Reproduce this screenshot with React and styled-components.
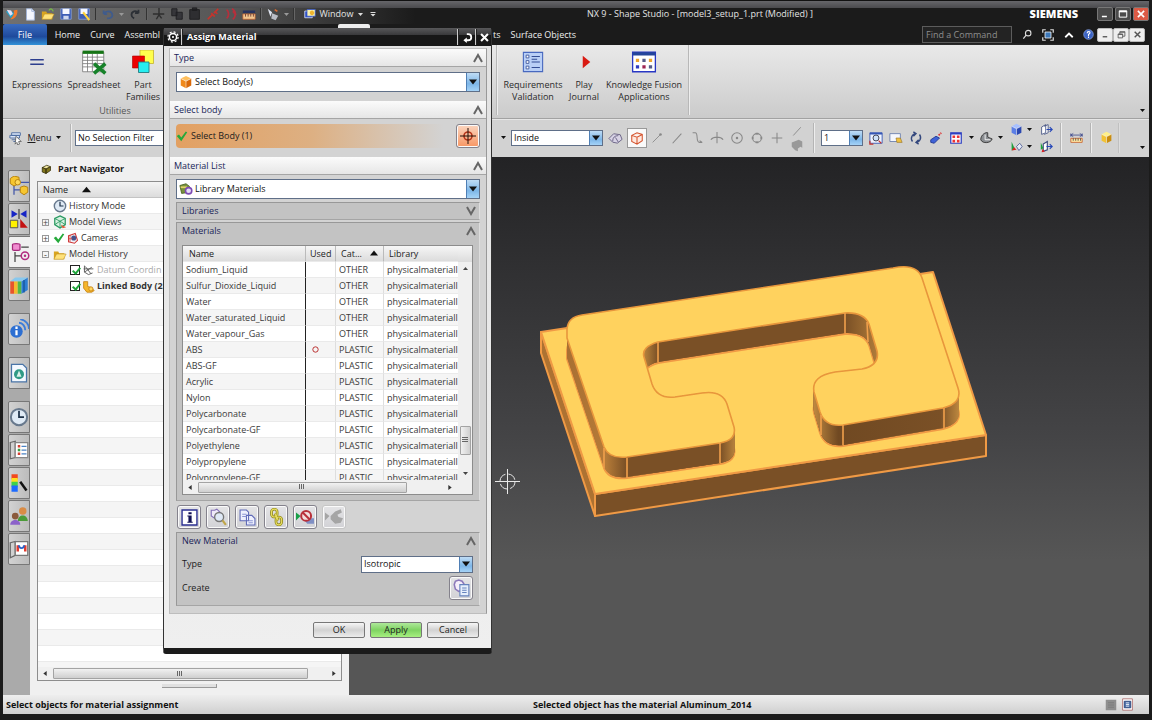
import { useState } from "react";
import styled, { createGlobalStyle, css } from "styled-components";

const GlobalStyle = createGlobalStyle`
  * { box-sizing: border-box; }
  body {
    margin: 0;
    background: #161616;
    color: #1c1c1c;
    font: 9px/12px "Open Sans", "Noto Sans", sans-serif;
  }
  button, select, input { font: inherit; color: inherit; margin: 0; }
  button { padding: 0; border: 0; background: none; }
  h1, h2, ul { margin: 0; padding: 0; font: inherit; list-style: none; }
  svg { display: block; flex: none; }
`;

/* ---------- icons ---------- */

const art = {
  logo: <><path d="M1 5l6 8 4-6-5-3z" fill="#27a3c9" /><path d="M6 14c6 0 9-6 8-11l-4 1c1 4-1 7-4 10z" fill="#f07a2c" /><path d="M2 3l5 1 2 4-3 2z" fill="#e8e0f4" /></>,
  page: <><path d="M4 2h6l3 3v10H4z" fill="#f4f7ff" stroke="#9fb2d8" /><path d="M10 2v3h3" fill="none" stroke="#9fb2d8" /></>,
  folder: <><path d="M1 14V5h5l1 2h6v7z" fill="#d9a520" /><path d="M1 14l3-6h11l-3 6z" fill="#ffe27a" stroke="#b98a1c" strokeWidth=".6" /></>,
  openFile: <><path d="M1 14V5h5l1 2h6v7z" fill="#d9a520" /><path d="M1 14l3-6h11l-3 6z" fill="#ffe27a" stroke="#b98a1c" strokeWidth=".6" /><path d="M9 4c2-3 4-2 5 1" fill="none" stroke="#79c143" strokeWidth="1.4" /></>,
  disk: <><path d="M2 2h12v12H2z" fill="#3d5db5" stroke="#8ea6e0" strokeWidth=".8" /><path d="M4 2h8v6H4z" fill="#f5f7ff" /><path d="M5 10h6v4H5z" fill="#cfd8ee" /></>,
  diskAs: <><path d="M2 2h12v12H2z" fill="#3d5db5" stroke="#8ea6e0" strokeWidth=".8" /><path d="M4 2h8v6H4z" fill="#f5f7ff" /><path d="M7 6l7 9" stroke="#ffd23c" strokeWidth="2.4" /></>,
  undo: <path d="M3 8c3-4 9-4 10 1 0 3-3 4-6 4M3 8V4M3 8h4" fill="none" stroke="#3f5b8c" strokeWidth="2" />,
  redo: <path d="M12 7C9 3 4 5 4 9c0 2 1 3 3 4M12 7V3M12 7H8" fill="none" stroke="#2c3036" strokeWidth="2" />,
  cut: <path d="M8 1v9M1 8h13M5 14l3-5 3 4" fill="none" stroke="#2e2e2e" strokeWidth="1.6" />,
  copy: <path d="M2 2h6v8H2zM7 6h7v8H7z" fill="#36363a" stroke="#1f1f22" />,
  paste: <path d="M2 3h11v11H2zM5 1h5v3H5z" fill="#2e2e31" stroke="#1d1d1f" />,
  curveRed: <path d="M2 14l5-5M9 7l5-5M6 7l4 4M10 5l3 3" fill="none" stroke="#c4342c" strokeWidth="2" />,
  spring: <path d="M3 3c3 2 3 8 0 10M9 2c5 2 5 9 1 12M10 5l4 4" fill="none" stroke="#b52f3c" strokeWidth="2" />,
  calendar: <><path d="M1 4h14v3H1z" fill="#26335f" /><path d="M1 8h14v6H1z" fill="#f0c58f" stroke="#c5602d" strokeWidth=".8" /><path d="M4 8v3M7 8v3M10 8v3M13 8v3" stroke="#6b3a33" /></>,
  touch: <><path d="M2 2l5 4-2 5z" fill="#dfe4ef" /><path d="M7 7l7 3-3 5-5-2z" fill="#b9bcc5" /><path d="M10 3l3 2" stroke="#d86a33" strokeWidth="2" /></>,
  windows: <><path d="M1 4h10v9H1z" fill="#2d4fc4" stroke="#e6edff" /><path d="M4 2h11v9H4z" fill="#f7f2b2" stroke="#3153c9" /><path d="M9 9a3 3 0 100-5 3 3 0 000 5z" fill="#f0b52e" /></>,
  cube: (a, b, c) => <><path d="M8 1l6 3-6 3-6-3z" fill={a} /><path d="M2 4l6 3v8l-6-3z" fill={b} /><path d="M14 4L8 7v8l6-3z" fill={c} /><path d="M2 4l6 3 6-3M8 7v8" fill="none" stroke="#fff" strokeWidth=".6" /></>,
  menu: <><path d="M3 2h10v3H3zM1 5h11v3H1z" fill="#dbe6f8" stroke="#47679e" /><path d="M3 10h5M5 12h4" stroke="#47679e" /><path d="M8 6l6 6-3 0 1 3-2 1-1-3-2 2z" fill="#fff" stroke="#333" strokeWidth=".7" /></>,
  check: <path d="M1 8l3-2 3 4 6-8 2 1-8 12z" fill="#25a93a" />,
  pinCube: <><path d="M3 6l6-3 5 2-6 3z" fill="#efe5a0" stroke="#332c08" /><path d="M3 6v6l5 2V8zM8 8l6-3v5l-6 4z" fill="#81761c" stroke="#332c08" /></>,
  clock: <><circle cx="8" cy="8" r="6.5" fill="#dfeaf5" stroke="#68798d" strokeWidth="1.6" /><path d="M8 3v5h4" fill="none" stroke="#1e3248" strokeWidth="1.4" /></>,
  views: <><path d="M8 1l6 3v7l-6 4-6-4V4z" fill="#d6f0df" stroke="#2a9a62" strokeWidth="1.4" /><path d="M2 4l6 3 6-3M8 7v8M2 11l6-4 6 4" fill="none" stroke="#2a9a62" /><path d="M9 11l6 3-4 1z" fill="#e25b37" /></>,
  camera: <><path d="M2 5l9-3 3 9-4 4-8-2z" fill="#f3f3f8" stroke="#d03939" strokeWidth="1.4" /><circle cx="9" cy="8" r="3.4" fill="#46538d" /><path d="M4 4v9M2 9h5" stroke="#d03939" /></>,
  datum: <path d="M3 2v8l5 3 5-2M3 10L12 4M4 3l7 9M2 6h12" fill="none" stroke="#555" strokeWidth="1.1" />,
  linked: <><path d="M2 2h5v6l4 1 4 4-3 2H6L2 10z" fill="#f5b62b" stroke="#c47f10" /><circle cx="11" cy="11" r="2.6" fill="#ffd760" stroke="#c47f10" /></>,
  tree1: <><path d="M4 6v9M4 11h6M7 5h9" stroke="#4357a8" strokeWidth="1" /><path d="M1 2l3-2 4 1v5L4 8 1 6z" fill="#f6c630" stroke="#b88410" strokeWidth=".8" /><circle cx="7" cy="5" r="2.2" fill="#ffd95a" stroke="#b88410" strokeWidth=".8" /><path d="M9 9l3-1 3 1v4l-3 2-3-2z" fill="#f6c630" stroke="#b88410" strokeWidth=".8" /></>,
  constraint: <><path d="M2 1l5 3-5 3zM14 1L9 4l5 3z" fill="#1725c6" /><path d="M8 0v8" stroke="#444" /><path d="M1 9h6v6H1z" fill="#fff200" stroke="#555" strokeWidth=".8" /><path d="M9 8l6 7H9z" fill="#c31111" /></>,
  partNav: <><path d="M2 2c0-1 6-1 6 0v4c0 1-6 1-6 0z" fill="#f08cd0" stroke="#a52a7b" /><path d="M4 8v8M4 11h5M9 4h6" stroke="#444" /><circle cx="12" cy="11" r="3" fill="none" stroke="#b32c80" strokeWidth="1.2" /><circle cx="12" cy="11" r="1" fill="#b32c80" /></>,
  books: <><path d="M1 5h3v10H1z" fill="#e8542c" /><path d="M4 5h3v10H4z" fill="#f5b92d" /><path d="M7 5h3v10H7z" fill="#53b848" /><path d="M10 5l5-3v10l-5 3z" fill="#2d7fd4" /><path d="M12 4v10" stroke="#174f94" /><path d="M1 5l4-3h10l-5 3z" fill="#88c8ee" /></>,
  info: <><circle cx="6" cy="10" r="5" fill="#2d6fd2" /><path d="M6 9v4M6 6v2" stroke="#fff" strokeWidth="1.8" /><path d="M8 3c3 0 5 3 5 6M9 0c4 1 7 4 7 8" fill="none" stroke="#3b7ddb" strokeWidth="1.5" /></>,
  webPage: <><path d="M2 1h9l3 3v11H2z" fill="#f4f9ff" stroke="#4a75a8" /><circle cx="8" cy="9" r="4" fill="#2f9a86" /><path d="M8 6l2 5H6z" fill="#d7f1e8" /></>,
  palette: <><path d="M1 2l4-1v13l-4 1z" fill="#d0d0d0" stroke="#666" /><path d="M5 2h10v12H5z" fill="#fff" stroke="#888" /><path d="M7 5h2" stroke="#d43f32" strokeWidth="2" /><path d="M7 8h2" stroke="#3a9c42" strokeWidth="2" /><path d="M7 11h2" stroke="#d43f32" strokeWidth="2" /><path d="M10 5h4M10 8h4M10 11h4" stroke="#4b83c4" /></>,
  rainbow: <><path d="M2 1h5v4H2z" fill="#f24a1d" /><path d="M2 4h5v4H2z" fill="#ffe01f" /><path d="M2 7h5v4H2z" fill="#3ed24b" /><path d="M2 10h5v5H2z" fill="#1d6bff" /><path d="M9 7l5 7" stroke="#111" strokeWidth="2" /></>,
  people: <><circle cx="11" cy="4" r="3" fill="#d98c45" /><path d="M7 12c0-6 8-6 8 0z" fill="#4b9b38" /><circle cx="5" cy="8" r="2.7" fill="#8b5a3c" /><path d="M1 15c0-5 8-5 8 0z" fill="#8b62c9" /></>,
  magnet: <><path d="M1 3l4-1v11l-4 2z" fill="#d0d0d0" stroke="#666" /><path d="M5 2h10v11H5z" fill="#fff" stroke="#777" /><path d="M7 5v5M13 5v5" stroke="#e23b2e" strokeWidth="2" /><path d="M8 5c0 3 4 3 4 0" stroke="#2b64c9" fill="none" strokeWidth="1.5" /></>,
  shell: <><path d="M1 9l5-5 7 1 2 5-5 4-5-1z" fill="#d8d3e6" stroke="#6a6384" /><path d="M5 12c0-4 2-6 6-6M8 8l3 5" fill="none" stroke="#6a6384" /></>,
  wireCube: <path d="M2 5l6-3 6 2v7l-6 4-6-3zM2 5l6 2 6-3M8 7v8" fill="#ffe9e0" stroke="#d4532d" strokeWidth="1.2" />,
  line1: <><path d="M3 13L12 4" stroke="#888" /><circle cx="12" cy="4" r="1.5" fill="#888" /></>,
  line2: <path d="M3 14L13 3" stroke="#888" strokeWidth="1.2" />,
  sCurve: <path d="M3 2h3c4 0 0 11 5 11h3M11 11l3 2" fill="none" stroke="#888" strokeWidth="1.2" />,
  cross: <path d="M8 1v13M1 10c3-4 11-4 14 0" fill="none" stroke="#888" strokeWidth="1.2" />,
  target: <><circle cx="8" cy="8" r="6" fill="none" stroke="#888" strokeWidth="1.2" /><circle cx="8" cy="8" r="1.4" fill="#888" /></>,
  quad: <><circle cx="8" cy="8" r="5" fill="none" stroke="#888" strokeWidth="1.2" /><path d="M8 2v2M8 12v2M2 8h2M12 8h2" stroke="#888" strokeWidth="3" /></>,
  plus: <path d="M8 2v12M2 8h12" stroke="#888" strokeWidth="1.2" />,
  face: <path d="M2 5l8-3 4 2v7l-2-1-3 2v3l-3-1-4-4z" fill="#999" />,
  fit: <><path d="M1 2h14v12H1z" fill="#eef3ff" stroke="#3556b5" /><path d="M1 3h14" stroke="#3556b5" strokeWidth="2" /><circle cx="8" cy="8" r="3.4" fill="#cfe2fa" stroke="#334" /><path d="M11 11l3 3M1 11v4h4" stroke="#c7332a" strokeWidth="1.4" fill="none" /></>,
  zoomBox: <><path d="M1 3h12v9H1z" fill="#f5f7fc" stroke="#6a7fae" /><path d="M8 8h5l2 5H9z" fill="#efc13f" stroke="#94712a" strokeWidth=".7" /></>,
  rotate: <path d="M4 12C1 8 4 3 8 3M12 4c3 4 0 9-4 9M5 1l3 2-3 3M11 15l-3-2 3-3" fill="none" stroke="#33477d" strokeWidth="1.6" />,
  pen: <><path d="M2 10l6-4 4 2-6 6-4-1z" fill="#3f62d8" stroke="#23398f" /><path d="M11 5l3-3" stroke="#d33" strokeWidth="2" strokeDasharray="2 1" /></>,
  grid: <><path d="M2 2h12v12H2z" fill="#fff" stroke="#2d3fc0" strokeWidth="1.4" /><path d="M4 5h3v3H4zM9 5h3v3H9zM4 10h3v3H4zM9 10h3v3H9z" fill="#e33" /><path d="M2 3h12" stroke="#2d3fc0" strokeWidth="2" /></>,
  shade: <><path d="M2 10c0-6 6-9 8-8v5l5 2c-1 5-11 6-13 1z" fill="#8b8e92" stroke="#333" /><path d="M7 4v6h6" stroke="#fff" fill="none" /></>,
  clip: <><path d="M2 5l5-3v10l-5 2zM5 4l5-2v10l-5 2" fill="#fff" stroke="#3c4b7d" /><path d="M8 8h7M12 5l3 3-3 3" fill="none" stroke="#2546b8" strokeWidth="1.4" /></>,
  clip2: <><path d="M4 5l5-3v10l-5 2z" fill="#fff" stroke="#3c4b7d" strokeWidth="1.4" /><path d="M1 3v9l3-2z" fill="#1da03d" /><path d="M3 11l3 3-4 1z" fill="#d22" /><path d="M8 8h7M12 5l3 3-3 3" fill="none" stroke="#2546b8" strokeWidth="1.4" /></>,
  axes: <><path d="M2 2v11l4-2z" fill="#1da03d" /><path d="M2 13l6-1-3-3z" fill="#d22" /><path d="M8 8l4-4 3 4-4 5z" fill="#e4eaf8" stroke="#4c5a90" /></>,
  ruler: <><path d="M1 3v4M15 3v4M1 5h14M4 3L1 5l3 2M12 3l3 2-3 2" fill="none" stroke="#3d4a8c" /><path d="M1 9h14v5H1z" fill="#ffe7a3" stroke="#c5602d" /><path d="M4 9v3M7 9v3M10 9v3M13 9v3" stroke="#444" /></>,
  gear: <><circle cx="8" cy="8" r="4.8" fill="none" stroke="#fff" strokeWidth="2" /><circle cx="8" cy="8" r="6.8" fill="none" stroke="#fff" strokeWidth="1.6" strokeDasharray="2.7 2.640" /><circle cx="8" cy="8" r="1.4" fill="#fff" /></>,
  reset: <><path d="M7 3h2c6 0 6 9 0 9H6" fill="none" stroke="#fff" strokeWidth="2.6" /><path d="M7 8v8l-5-4z" fill="#fff" /></>,
  close: <path d="M3 3l10 10M13 3L3 13" stroke="#fff" strokeWidth="3" />,
  library: <><path d="M1 4l7-2 4 3-2 7-7 1z" fill="#78923f" stroke="#4d6522" /><path d="M2 6h7" stroke="#e4d36a" strokeWidth="2" /><circle cx="11" cy="10" r="3.6" fill="#e6dff5" stroke="#7d4bb4" strokeWidth="1.8" /></>,
  aim: <><circle cx="8" cy="8" r="4" fill="none" stroke="#b53419" strokeWidth="1.6" /><path d="M8 0v16M0 8h16" stroke="#221108" strokeWidth="1" /></>,
  infoBox: <><path d="M1 1h14v14H1z" fill="#fff" stroke="#2c3192" strokeWidth="1.3" /><path d="M7 3h3v2H7zM6 6h4v6h1v1H6v-1h1V7H6z" fill="#111154" /></>,
  inspect: <><path d="M2 2h3l2-1 2 2 2 2-1 3-2 2-3-1-3-2z" fill="#efeaf9" stroke="#8370b8" /><circle cx="9" cy="8" r="4" fill="#dfe9f6" stroke="#777" strokeWidth="1.2" /><path d="M12 11l3 4" stroke="#c0a64b" strokeWidth="2" /></>,
  copyDoc: <><path d="M1 1h6l2 2v8H1zM7 6h5l3 3v6H7z" fill="#eef0fd" stroke="#5f6ab8" /><path d="M3 5h4M3 7h4M9 11h4M9 13h4" stroke="#8c95d3" /></>,
  chain: <g fill="none"><g stroke="#8f8618" strokeWidth="2.4"><rect x="4" y="1" width="5" height="7" rx="2.5" /><rect x="8" y="8" width="5" height="7" rx="2.5" /><path d="M7 5l3 6" /></g><g stroke="#e9df62" strokeWidth="1"><rect x="4" y="1" width="5" height="7" rx="2.5" /><rect x="8" y="8" width="5" height="7" rx="2.5" /><path d="M7 5l3 6" /></g></g>,
  noMat: <><path d="M0 4l4 3-4 4z" fill="#18a048" /><path d="M6 9l4 5h6v-5z" fill="#7f8fc4" /><circle cx="9" cy="7" r="4.4" fill="#f2dede" stroke="#b8303a" strokeWidth="1.8" /><path d="M6 4l6 6" stroke="#b8303a" strokeWidth="1.8" /></>,
  grayMat: <path d="M0 4l4 3-4 4zM5 7l4-4 5-2 1 3-4 2 1 2 4 1-2 4-5 1-4-4z" fill="#a5a5a5" />,
  create: <><path d="M3 2l3-1 3 1 2 3-1 5-4 1-3-2-1-4z" fill="#f5eefa" stroke="#8c79ba" strokeWidth="1.4" /><path d="M7 5h8v10H7z" fill="#e6effc" stroke="#6683bd" /><path d="M9 8h4M9 10h4M9 12h4" stroke="#6683bd" /></>,
  equals: <path d="M2 6h12M2 10h12" stroke="#2d3e8e" strokeWidth="1.4" />,
  sheet: <><path d="M1 2h13v12H1z" fill="#fff" stroke="#777" strokeWidth=".5" /><path d="M1 5h13M1 7h13M1 9h13M1 11h13M4 3v11M7 3v11M10 3v11" stroke="#777" strokeWidth=".5" /><path d="M1 1h13v2H1z" fill="#157415" /><path d="M8 9l7 6M15 9l-7 6" stroke="#17822a" strokeWidth="2.2" /></>,
  families: <><path d="M6 0h9v9H6z" fill="#ffff4d" stroke="#c9b93a" strokeWidth=".6" /><path d="M1 4h8v8H1z" fill="#ec0000" stroke="#a00" strokeWidth=".4" /><path d="M5 8h7v7H5z" fill="#26eef0" stroke="#247b80" strokeWidth=".6" /></>,
  requirements: <><path d="M1 1h14v14H1z" fill="#b9cff6" stroke="#4768bf" strokeWidth=".8" /><path d="M7 4h6M7 6h4M7 8h6M7 12h6" stroke="#334d94" strokeWidth=".8" /><path d="M3 3h2v2H3zM3 7h2v2H3zM3 11h2v2H3z" fill="#fff" stroke="#334d94" strokeWidth=".6" /></>,
  play: <path d="M7 3l6 5-6 5z" fill="#d91a12" />,
  fusion: <><path d="M1 2h14v12H1z" fill="#fff" stroke="#2837c4" strokeWidth=".8" /><path d="M1 2h14v2H1z" fill="#24459a" /><g strokeWidth="2"><path d="M3 7h2M11 7h2" stroke="#eea42d" /><path d="M7 7h2M11 11h2" stroke="#555c88" /><path d="M3 11h2" stroke="#303bbf" /><path d="M7 11h2" stroke="#9d2453" /></g></>,
  search: <><circle cx="9" cy="6" r="4" fill="none" stroke="#ddd" strokeWidth="1.6" /><path d="M6 9l-4 5" stroke="#ddd" strokeWidth="1.8" /></>,
  full: <><path d="M1 5V1h4M11 1h4v4M15 11v4h-4M5 15H1v-4" fill="none" stroke="#ddd" strokeWidth="1.6" /><path d="M4 4h8v8H4z" fill="#3d78b8" stroke="#fff" /></>,
  up: <path d="M3 11l5-5 5 5" fill="none" stroke="#fff" strokeWidth="2.4" />,
  help: <><circle cx="8" cy="8" r="7" fill="#3a62c4" stroke="#8fa9e6" /><path d="M6 6c0-3 5-3 4 0l-2 2v2M8 11v2" fill="none" stroke="#fff" strokeWidth="1.6" /></>,
  min: <path d="M3 12h8" stroke="currentColor" strokeWidth="2.4" />,
  max: <><path d="M2 3h12v10H2z" fill="none" stroke="currentColor" strokeWidth="1.6" /><path d="M2 4h12" stroke="currentColor" strokeWidth="2.6" /></>,
  restore: <path d="M2 7h8v7H2zM5 7V3h9v8h-4M2 8h8M5 4h9" fill="none" stroke="currentColor" strokeWidth="1.5" />,
  x: <path d="M3 3l10 10M13 3L3 13" stroke="currentColor" strokeWidth="2.6" />,
  layout: <><path d="M2 1h12v14H2z" fill="#fff" stroke="#a66" /><path d="M4 4h8v8H4z" fill="#4a6ea8" stroke="#223e74" /><path d="M6 6h4M6 8h4M6 10h4" stroke="#fff" /></>,
  customize: <path d="M3 4h10v2H3zM3 8h10l-5 5z" fill="#ddd" />,
};

const orangeCube = art.cube("#ffbf5c", "#f08a1d", "#d9690a");
const blueCube = art.cube("#a7c0ff", "#5b7ee6", "#2b48b0");
const goldCube = art.cube("#fff08a", "#f2c233", "#c98d10");

const Icon = ({ size = 14, children }) => (
  <svg width={size} height={size} viewBox="0 0 16 16" aria-hidden="true">{children}</svg>
);
const Caret = ({ c = "#111", size = 5, flip }) => (
  <svg width={size} height={size} viewBox="0 0 10 10" aria-hidden="true"><path d={flip ? "M0 8h10L5 2z" : "M0 2h10L5 8z"} fill={c} /></svg>
);
const Chevron = ({ down }) => (
  <svg width="10" height="10" viewBox="0 0 10 10" aria-hidden="true">
    <path d={down ? "M1 1l4 7 4-7" : "M1 9l4-7 4 7"} fill="none" stroke="#666" strokeWidth="2" />
  </svg>
);

/* ---------- window frame ---------- */

const Window = styled.div`
  position: relative;
  display: flex;
  flex-direction: column;
  height: 100vh;
  overflow: hidden;
  padding: 0 3px 6px;
  background: #1b1b1b;
`;

const TitleBar = styled.header`
  display: flex;
  align-items: center;
  height: 24px;
  padding-top: 3px;
  border-top: 1px solid #111;
  color: #e4e4e4;
  background:
    linear-gradient(#66666a 0, #4a4a4d 7px, transparent 7px),
    linear-gradient(90deg, #707070 0, #565656 20%, #1b1b1b 36%);
`;

const QuickBar = styled.div`
  display: flex;
  align-items: center;
  flex: 0 0 486px;
`;

const ToolButton = styled.button`
  display: flex;
  align-items: center;
  justify-content: center;
  gap: 4px;
  flex: none;
  width: ${(p) => p.$w || 18}px;
  height: ${(p) => p.$h || 18}px;
  ${(p) => p.$boxed && css`
    background: #fafafa;
    border: 1px solid #999;
  `}
`;

const Divider = styled.span`
  flex: none;
  width: 2px;
  height: ${(p) => p.$h || 12}px;
  margin: 0 ${(p) => p.$gap ?? 2}px;
  background: ${(p) => p.$c || "#333"};
  border-right: 1px solid ${(p) => p.$light || "#666"};
`;

const WindowTitle = styled.h1`
  flex: 1;
  padding-left: 98px;
  white-space: nowrap;
`;

const Brand = styled.span`
  margin-right: 17px;
  color: #fff;
  font: 800 11px/12px "Open Sans", sans-serif;
`;

const FrameButton = styled.button`
  display: grid;
  place-items: center;
  width: 16px;
  height: 14px;
  margin-left: ${(p) => (p.$tone === "light" ? 0 : 2)}px;
  border: 1px solid ${(p) => (p.$tone === "light" ? "#bbb" : "#777")};
  border-radius: 2px;
  color: ${(p) => (p.$tone === "light" ? "#555" : "#fff")};
  background: ${(p) => ({ light: "#eee", red: "#dc5a45" }[p.$tone] || "#4b4b4b")};
`;

const TabBar = styled.nav`
  display: flex;
  flex: none;
  height: 21px;
  color: #eee;
  background: radial-gradient(ellipse at 84% 130%, #6a6a6a 0, #1b1b1b 22%);
`;

const Tab = styled.button`
  padding: 0 5px;
  white-space: nowrap;
  ${(p) => p.$file && css`
    width: 46px;
    margin-right: 3px;
    color: #fff;
    background: linear-gradient(#3a6cc0, #1f4a9c 60%, #3292d8);
    border-radius: 2px 2px 0 0;
  `}
`;

/* the half of a bar that runs in under the dialog */
const Under = styled.div`
  display: flex;
  flex: 0 0 ${(p) => p.$w || 485}px;
  align-items: ${(p) => p.$align || "stretch"};
  overflow: hidden;
`;

const ClippedTabs = styled.div`
  display: flex;
  width: 162px;
  overflow: hidden;
`;

const OpenTab = styled.span`
  width: 32px;
  margin-left: 173px;
  background: #eee;
  border-radius: 2px 2px 0 0;
`;

const TabTools = styled.div`
  display: flex;
  align-items: center;
  margin-left: auto;
`;

const CommandInput = styled.input`
  width: 90px;
  height: 17px;
  margin-right: 5px;
  padding: 0 3px;
  border: 1px solid #5c5c5c;
  background: #232323;
  &::placeholder { color: #8e8e8e; opacity: 1; }
`;

/* ---------- ribbon ---------- */

const Ribbon = styled.section`
  display: flex;
  flex: none;
  height: 74px;
  background: linear-gradient(#e9e9e9, #cbcbcb);
  border-bottom: 1px solid #a2a2a2;
`;

const RibbonGroup = styled.div`
  display: grid;
  grid-template-rows: 60px 12px;
  width: 224px;
  color: #555;
  > span { text-align: center; }
`;

const RibbonItems = styled.div`
  display: flex;
  align-items: flex-start;
  color: #2b2b2b;
`;

const RibbonButton = styled.button`
  display: flex;
  flex-direction: column;
  align-items: center;
  flex: none;
  width: ${(p) => p.$w}px;
  white-space: pre;
`;

const RibbonArt = styled.span`
  display: grid;
  place-items: center;
  height: 34px;
`;

const Corner = styled.span`
  align-self: flex-end;
  margin: 0 4px 5px auto;
`;

const SelectionBar = styled.section`
  display: flex;
  flex: none;
  align-items: center;
  height: 38px;
  padding-bottom: 2px;
  background: #d2d2d2;
  border-top: 1px solid #e6e6e6;
`;

const Stack = styled.div`
  display: flex;
  flex-direction: column;
`;

const PickerBox = styled.div`
  display: flex;
  align-items: center;
  flex: none;
  width: ${(p) => (p.$w ? `${p.$w}px` : "100%")};
  height: ${(p) => p.$h || 16}px;
  padding-left: ${(p) => (p.$icon ? 2 : 0)}px;
  border: 1px solid #5f6f88;
  background: #fff;
`;

const PickerSelect = styled.select`
  flex: 1;
  min-width: 0;
  height: 100%;
  padding: 0 2px;
  border: 0;
  appearance: none;
  background: transparent;
  color: #111;
`;

const PickerArrow = styled.span`
  display: grid;
  place-items: center;
  width: 13px;
  height: 100%;
  border-left: 1px solid #4f7fb5;
  background: linear-gradient(#bfdcf5, #7db6e8 60%, #a5d3f7);
  pointer-events: none;
`;

const Picker = ({ label, value, w, h, icon }) => (
  <PickerBox $w={w} $h={h} $icon={icon}>
    {icon && <Icon size={14}>{icon}</Icon>}
    <PickerSelect aria-label={label} defaultValue={value}>
      <option>{value}</option>
    </PickerSelect>
    <PickerArrow><Caret size={8} /></PickerArrow>
  </PickerBox>
);

/* ---------- main area ---------- */

const Main = styled.main`
  display: flex;
  flex: 1;
  min-height: 0;
`;

const ResourceBar = styled.nav`
  display: flex;
  flex-direction: column;
  gap: 1px;
  flex: 0 0 27px;
  padding: 13px 0 0 5px;
  background: #aaa;
`;

const ResourceTab = styled.button`
  display: grid;
  place-items: center;
  height: 32px;
  margin-top: ${(p) => (p.$gap ? 11 : 0)}px;
  border: 1px solid #777;
  border-right-width: ${(p) => (p.$on ? 0 : 1)}px;
  border-radius: 2px 0 0 2px;
  background: ${(p) => (p.$on ? "#f0f0f0" : "linear-gradient(90deg, #d2d2d2, #bcbcbc)")};
`;

const Navigator = styled.aside`
  display: flex;
  flex-direction: column;
  flex: 0 0 319px;
  padding: 0 7px 7px;
  background: #f0f0f0;
`;

const NavTitle = styled.h2`
  display: flex;
  align-items: center;
  gap: 6px;
  height: 24px;
  padding-left: 3px;
  font-weight: 700;
`;

const TreeBox = styled.div`
  display: flex;
  flex-direction: column;
  flex: 1;
  min-height: 0;
  border: 1px solid #8d8d8d;
  background: #fff;
`;

const TreeHead = styled.div`
  display: flex;
  align-items: center;
  gap: 14px;
  flex: 0 0 16px;
  padding-left: 5px;
  border-bottom: 1px solid #c4c4c4;
  background: linear-gradient(#f4f4f4, #dcdcdc);
`;

const Tree = styled.ul`
  flex: 1;
  background: repeating-linear-gradient(#fff 0 15px, #eaeaea 15px 16px, #f5f5f5 16px 31px, #eaeaea 31px 32px);
`;

const TreeRow = styled.li`
  display: flex;
  align-items: center;
  gap: 2px;
  height: 16px;
  padding-left: ${(p) => p.$indent}px;
  color: ${(p) => (p.$dim ? "#aaa" : "#333")};
  font-weight: ${(p) => (p.$bold ? 700 : 400)};
  white-space: nowrap;
`;

const Expander = styled.button`
  display: grid;
  place-items: center;
  width: 7px;
  height: 7px;
  margin-right: 2px;
  border: 1px solid #999;
  color: #444;
  line-height: 5px;
`;

const TreeCheck = styled.input`
  appearance: none;
  display: grid;
  width: 10px;
  height: 10px;
  border: 1px solid #222;
  background: #fff;
  &:checked::after {
    content: "";
    width: 3px;
    height: 6px;
    margin-left: 3px;
    border: solid #1fa53b;
    border-width: 0 2px 2px 0;
    transform: rotate(40deg);
  }
`;

const HBar = styled.div`
  display: flex;
  align-items: center;
  flex: none;
  height: ${(p) => p.$h || 13}px;
  padding: 0 ${(p) => p.$end || 5}px 0 5px;
  background: #f0f0f0;
`;

const Thumb = styled.span`
  display: grid;
  place-items: center;
  flex: 0 0 ${(p) => p.$len}%;
  margin: ${(p) => (p.$vertical ? "0" : "0 auto 0 6px")};
  ${(p) => (p.$vertical ? "width: 11px" : "height: 11px")};
  border: 1px solid #a3a3a3;
  border-radius: 1px;
  background: linear-gradient(${(p) => (p.$vertical ? "90deg, " : "")}#f1f1f1, #cfcfcf);
`;

const Grip = ({ turn }) => (
  <svg width="6" height="6" viewBox="0 0 6 6" shapeRendering="crispEdges" aria-hidden="true">
    <path d={turn ? "M0 0h6v1H0zM0 2h6v1H0zM0 4h6v1H0z" : "M0 0h1v5H0zM2 0h1v5H2zM4 0h1v5H4z"} fill="#666" />
  </svg>
);
const SideCaret = ({ right }) => (
  <svg width="4" height="5" viewBox="0 0 4 6" aria-hidden="true"><path d={right ? "M0 0v6l4-3z" : "M4 0v6L0 3z"} fill="#333" /></svg>
);

const Splitter = styled.span`
  align-self: center;
  width: 55px;
  height: 4px;
  margin-top: 3px;
  border: solid #999;
  border-width: 0 1px 1px 0;
  background: #e0e0e0;
`;

const Viewport = styled.section`
  flex: 1;
  min-width: 0;
  background: linear-gradient(#232325, #444446 52%, #565656 75%);
  svg { width: 100%; height: 100%; }
`;

const StatusBar = styled.footer`
  display: flex;
  align-items: center;
  flex: none;
  height: 19px;
  padding: 0 12px 0 3px;
  color: #111;
  font-weight: 700;
  background: linear-gradient(#eee, #cfcfcf);
`;

const StatusText = styled.span`
  flex: ${(p) => (p.$first ? "0 0 527px" : 1)};
`;

/* ---------- dialog ---------- */

const Dialog = styled.section`
  position: absolute;
  left: 163px;
  top: 28px;
  width: 329px;
  border: 1px solid #333;
  border-width: 0 1px 6px 1px;
  border-bottom-color: #1b1b1b;
  border-radius: 3px;
  background: linear-gradient(#e2e2e2, #efefef);
`;

const DialogTitle = styled.header`
  display: flex;
  align-items: center;
  height: 18px;
  color: #fff;
  background: linear-gradient(#58585a, #39393b 7px, #171717 7px);
  h2 { flex: 1; padding-left: 4px; font-weight: 700; }
`;

const DialogBody = styled.div`
  margin: 2px 4px 0 5px;
  border: 1px solid #bdbdbd;
  border-right: 1px solid #999;
  background: #d3d3d3;
`;

const SectionHead = styled.button`
  display: flex;
  align-items: center;
  justify-content: space-between;
  width: 100%;
  height: ${(p) => (p.$inner ? 16 : 18)}px;
  padding: 0 3px 0 ${(p) => (p.$inner ? 5 : 4)}px;
  color: #201f58;
  ${(p) => !p.$inner && css`
    background: linear-gradient(#fbfbfb, #e6e6e6);
    border-bottom: 1px solid #a5a5a5;
  `}
`;

const SectionBody = styled.div`
  padding: ${(p) => p.$pad || "5px 6px 9px"};
`;

const Group = styled.div`
  margin-top: ${(p) => p.$mt || 0}px;
  padding-bottom: ${(p) => p.$pb || 0}px;
  border: 1px solid #989898;
  border-bottom-color: #a5a5a5;
  border-right-color: #ddd;
  background: #c3c3c3;
`;

const PickRow = styled.div`
  display: flex;
  align-items: center;
  justify-content: space-between;
  height: 24px;
  border-radius: 4px;
  background: linear-gradient(90deg, #e2a062, #ddb083 45%, #d3d3d3 88%);
  span { display: flex; align-items: center; gap: 3px; }
`;

const IconButton = styled.button`
  display: grid;
  place-items: center;
  width: 24px;
  height: 24px;
  border: 1px solid ${(p) => (p.$faded ? "#c6c6c6" : "#84828c")};
  border-radius: 3px;
  box-shadow: inset 0 0 0 1px #fafafa;
  background: ${(p) => (p.$hot ? "linear-gradient(#fbd5bf, #f79663)" : "linear-gradient(#e4e4e6, #d2d2d6)")};
`;

const IconRow = styled.div`
  display: flex;
  gap: 5px;
  padding: 4px 1px 3px;
`;

const TableFrame = styled.div`
  margin: 6px 6px 0 5px;
  border: 1px solid #8c8c8c;
  background: #fff;
`;

const TableArea = styled.div`
  display: flex;
  height: 234px;
  overflow: hidden;
`;

const MaterialTable = styled.table`
  flex: 1;
  width: 276px;
  table-layout: fixed;
  border-collapse: separate;
  border-spacing: 0;
  th, td {
    height: 16px;
    padding: 0 3px;
    overflow: hidden;
    line-height: 15px;
    text-align: left;
    white-space: nowrap;
    font-weight: 400;
    border-bottom: 1px solid #eaeaea;
    border-right: 1px solid #dedede;
  }
  th {
    padding-left: 5px;
    background: linear-gradient(#f6f6f6, #dcdcdc);
    border-right-color: #bbb;
  }
  th:first-child { padding-left: 6px; }
  th:nth-child(2) { padding-left: 4px; }
  td:first-child { border-right-color: #222; }
  td { color: #3a3a3a; }
  tbody tr:nth-child(even) { background: #f5f5f5; }
  svg { display: inline; margin-left: 8px; }
  .used svg { margin: 0 0 0 3px; }
  td:last-child, th:last-child { border-right: 0; text-overflow: clip; }
`;

const VBar = styled.div`
  display: flex;
  flex-direction: column;
  align-items: center;
  flex: 0 0 14px;
  height: 100%;
  padding-bottom: 4px;
  background: #f0f0f0;
  &::before {
    content: "";
    flex: 0 0 16px;
    width: 100%;
    margin-bottom: 4px;
    background: linear-gradient(#f6f6f6, #dcdcdc);
  }
`;

const Track = styled.div`
  display: flex;
  flex: 1;
  flex-direction: column;
  justify-content: flex-end;
  padding-bottom: 16px;
`;

const FieldRow = styled.div`
  display: flex;
  align-items: center;
  justify-content: space-between;
  height: 24px;
  padding: 0 6px 0 5px;
`;

const DialogFooter = styled.footer`
  display: flex;
  justify-content: flex-end;
  gap: 5px;
  padding: 8px 12px 10px;
`;

const FooterButton = styled.button`
  width: 52px;
  height: 16px;
  border: 1px solid #777;
  border-radius: 2px;
  background: ${(p) => (p.$primary
    ? "linear-gradient(#aee89a, #7fd362 50%, #a6f07f)"
    : "linear-gradient(#f6f6f6, #d2d2d2 50%, #ececec)")};
`;

/* ---------- data ---------- */

const materials = [
  ["Sodium_Liquid", "OTHER"],
  ["Sulfur_Dioxide_Liquid", "OTHER"],
  ["Water", "OTHER"],
  ["Water_saturated_Liquid", "OTHER"],
  ["Water_vapour_Gas", "OTHER"],
  ["ABS", "PLASTIC", true],
  ["ABS-GF", "PLASTIC"],
  ["Acrylic", "PLASTIC"],
  ["Nylon", "PLASTIC"],
  ["Polycarbonate", "PLASTIC"],
  ["Polycarbonate-GF", "PLASTIC"],
  ["Polyethylene", "PLASTIC"],
  ["Polypropylene", "PLASTIC"],
  ["Polypropylene-GF", "PLASTIC"],
];

const quickTools = [
  ["Start", art.logo], ["New", art.page], ["Open", art.openFile], ["Save", art.disk], ["Save As", art.diskAs], null,
  ["Undo", art.undo], "caret", ["Redo", art.redo], null,
  ["Cut", art.cut], ["Copy", art.copy], ["Paste", art.paste], ["Curve", art.curveRed], ["Spring", art.spring], ["Plan", art.calendar], null,
  ["Touch", art.touch], "caret", null,
];

const snaps = [
  ["End", art.line1], ["Mid", art.line2], ["Control", art.sCurve], ["Cross", art.cross],
  ["Centre", art.target], ["Quadrant", art.quad], ["Point", art.plus],
];

const resources = [
  ["Assembly", art.tree1], ["Constraint", art.constraint], ["Part", art.partNav], ["Reuse", art.books],
  ["Info", art.info, true], ["Web", art.webPage, true], ["History", art.clock, true], ["Palette", art.palette],
  ["Colour", art.rainbow], ["Roles", art.people], ["Scenes", art.magnet],
];

/* ---------- 3d part ---------- */

const blockTop =
  "M567 329Q568 317 582 315L893 268Q917 263 922 278L958 388Q963 403 943 408L843 425" +
  "Q825 427 820 412L814 392Q811 376 835 372L862 369Q880 365 877 351L869 324Q864 312 845 313" +
  "L658 342Q641 347 644 357L652 384Q657 399 675 397L702 393Q722 390 727 404L734 427" +
  "Q737 440 720 443L627 457Q609 459 604 447L567 338Z";
const depth = Array.from({ length: 21 }, (_, i) => 20 - i);

const Part = () => (
  <svg viewBox="349 157 800 538" preserveAspectRatio="xMinYMin meet" role="img" aria-label="Part">
    <defs>
      <linearGradient id="wallBack" gradientUnits="userSpaceOnUse" x1="567" x2="880" y1="0" y2="0">
        <stop offset="0" stopColor="#a96f32" /><stop offset=".24" stopColor="#c08a40" /><stop offset=".29" stopColor="#7a5026" />
        <stop offset=".89" stopColor="#7a5026" /><stop offset="1" stopColor="#b47f3b" />
      </linearGradient>
      <linearGradient id="wallFront" gradientUnits="userSpaceOnUse" x1="567" x2="960" y1="0" y2="0">
        <stop offset="0" stopColor="#a96f32" /><stop offset=".1" stopColor="#b57b38" /><stop offset=".15" stopColor="#7a5026" />
        <stop offset=".39" stopColor="#7a5026" /><stop offset=".43" stopColor="#bc863f" /><stop offset=".63" stopColor="#bc863f" />
        <stop offset=".69" stopColor="#704922" /><stop offset=".95" stopColor="#7a5026" /><stop offset="1" stopColor="#c08a40" />
      </linearGradient>
      <clipPath id="frontHalf"><path d="M540 386H1000V520H540z" /></clipPath>
    </defs>
    <g stroke="#f09a45" strokeWidth="2" strokeLinejoin="round">
      <path d="M541 332L595 494V516L541 353Z" fill="#ad7232" />
      <path d="M595 494L986 435V456L595 516Z" fill="#7a5026" />
      <path d="M541 332L933 272L986 435L595 494Z" fill="#ffd25e" />
      <path d={blockTop} transform="translate(0 21)" fill="#7a5026" />
    </g>
    <g fill="url(#wallBack)">{depth.map((d) => <path key={d} d={blockTop} transform={`translate(0 ${d})`} />)}</g>
    <g fill="url(#wallFront)" clipPath="url(#frontHalf)">
      {depth.map((d) => <path key={d} d={blockTop} transform={`translate(0 ${d})`} />)}
    </g>
    <path d={blockTop} fill="#ffd25e" stroke="#e8963c" strokeWidth="1.6" />
    <path d="M658 342v20M845 313v20M867 322l1 20M627 458v20M720 443v20M821 415v20M843 425v20M944 408v20M604 448v20" stroke="#f0a04c" strokeWidth="1.6" />
    <g fill="none" stroke="#e8e8e8">
      <circle cx="507.500" cy="481.500" r="7.500" strokeDasharray="9 3" />
      <path d="M507.500 469v25M495 481.500h25" />
    </g>
  </svg>
);

function AssignMaterial() {
  const [open, setOpen] = useState(true);
  return (
    <Dialog role="dialog" aria-label="Assign Material">
      <DialogTitle>
        <ToolButton $w={17} aria-label="Options"><Icon size={12}>{art.gear}</Icon></ToolButton>
        <Divider $h={16} $gap={0} $c="#ccc" $light="#222" />
        <h2>Assign Material</h2>
        <Divider $h={16} $gap={0} $c="#ccc" $light="#222" />
        <ToolButton $w={16} aria-label="Reset"><Icon size={11}>{art.reset}</Icon></ToolButton>
        <Divider $h={16} $gap={0} $c="#ccc" $light="#222" />
        <ToolButton $w={14} aria-label="Close"><Icon size={11}>{art.close}</Icon></ToolButton>
      </DialogTitle>
      <DialogBody>
        <SectionHead>Type<Chevron /></SectionHead>
        <SectionBody>
          <Picker label="Type" value="Select Body(s)" h={20} icon={orangeCube} />
        </SectionBody>
        <SectionHead>Select body<Chevron /></SectionHead>
        <SectionBody>
          <PickRow>
            <span><Icon size={12}>{art.check}</Icon>Select Body (1)</span>
            <IconButton $hot aria-label="Select body"><Icon size={16}>{art.aim}</Icon></IconButton>
          </PickRow>
        </SectionBody>
        <SectionHead onClick={() => setOpen(!open)}>Material List<Chevron down={!open} /></SectionHead>
        {open && (
          <SectionBody $pad="4px 6px 7px">
            <Picker label="Material list" value="Library Materials" h={20} icon={art.library} />
            <Group $mt={3}><SectionHead $inner>Libraries<Chevron down /></SectionHead></Group>
            <Group $mt={2} $pb={5}>
              <SectionHead $inner>Materials<Chevron /></SectionHead>
              <TableFrame>
                <TableArea>
                  <MaterialTable>
                    <colgroup><col width="123" /><col width="30" /><col width="48" /><col /></colgroup>
                    <thead>
                      <tr><th>Name</th><th>Used</th><th>Cat...<Caret size={8} flip /></th><th>Library</th></tr>
                    </thead>
                    <tbody>
                      {materials.map(([name, cat, used]) => (
                        <tr key={name}>
                          <td>{name}</td>
                          <td className="used">
                            {used && <svg width="7" height="7" viewBox="0 0 7 7"><circle cx="3.500" cy="3.500" r="2.700" fill="none" stroke="#b33" /></svg>}
                          </td>
                          <td>{cat}</td>
                          <td>physicalmateriall</td>
                        </tr>
                      ))}
                    </tbody>
                  </MaterialTable>
                  <VBar>
                    <Caret c="#444" flip />
                    <Track><Thumb $vertical $len={16}><Grip turn /></Thumb></Track>
                    <Caret c="#444" />
                  </VBar>
                </TableArea>
                <HBar $h={14} $end={20}>
                  <SideCaret /><Thumb $len={79}><Grip /></Thumb><SideCaret right />
                </HBar>
              </TableFrame>
            </Group>
            <IconRow>
              <IconButton aria-label="Inspect"><Icon size={17}>{art.infoBox}</Icon></IconButton>
              <IconButton aria-label="Find"><Icon size={18}>{art.inspect}</Icon></IconButton>
              <IconButton aria-label="Copy"><Icon size={17}>{art.copyDoc}</Icon></IconButton>
              <IconButton aria-label="Link"><Icon size={18}>{art.chain}</Icon></IconButton>
              <IconButton aria-label="Remove"><Icon size={18}>{art.noMat}</Icon></IconButton>
              <IconButton $faded aria-label="Update"><Icon size={18}>{art.grayMat}</Icon></IconButton>
            </IconRow>
            <Group $pb={5}>
              <SectionHead $inner>New Material<Chevron /></SectionHead>
              <SectionBody $pad="3px 0 0">
                <FieldRow>Type<Picker label="New material type" value="Isotropic" w={112} h={17} /></FieldRow>
                <FieldRow>Create<IconButton aria-label="Create"><Icon size={18}>{art.create}</Icon></IconButton></FieldRow>
              </SectionBody>
            </Group>
          </SectionBody>
        )}
      </DialogBody>
      <DialogFooter>
        <FooterButton>OK</FooterButton>
        <FooterButton $primary>Apply</FooterButton>
        <FooterButton>Cancel</FooterButton>
      </DialogFooter>
    </Dialog>
  );
}

function App() {
  return (
    <Window>
      <GlobalStyle />
      <TitleBar>
        <QuickBar>
          {quickTools.map((t, i) => {
            if (!t) return <Divider key={i} />;
            if (t === "caret") return <ToolButton key={i} $w={9} aria-label="More"><Caret c="#999" /></ToolButton>;
            return <ToolButton key={i} aria-label={t[0]}><Icon>{t[1]}</Icon></ToolButton>;
          })}
          <ToolButton $w={72}><Icon size={12}>{art.windows}</Icon>Window<Caret c="#ddd" /></ToolButton>
          <ToolButton $w={8} aria-label="Customize"><Icon size={8}>{art.customize}</Icon></ToolButton>
        </QuickBar>
        <WindowTitle>NX 9 - Shape Studio - [model3_setup_1.prt (Modified) ]</WindowTitle>
        <Brand>SIEMENS</Brand>
        <FrameButton aria-label="Minimize"><Icon size={10}>{art.min}</Icon></FrameButton>
        <FrameButton aria-label="Maximize"><Icon size={10}>{art.max}</Icon></FrameButton>
        <FrameButton $tone="red" aria-label="Close"><Icon size={10}>{art.x}</Icon></FrameButton>
      </TitleBar>

      <TabBar>
        <Under>
          <ClippedTabs>
            <Tab $file>File</Tab>
            <Tab>Home</Tab>
            <Tab>Curve</Tab>
            <Tab>Assembl</Tab>
          </ClippedTabs>
          <OpenTab />
        </Under>
        <Tab>ts</Tab>
        <Tab>Surface Objects</Tab>
        <TabTools>
          <CommandInput aria-label="Find a Command" placeholder="Find a Command" />
          <ToolButton $w={20} aria-label="Search"><Icon size={11}>{art.search}</Icon></ToolButton>
          <ToolButton $w={21} aria-label="Full screen"><Icon size={12}>{art.full}</Icon></ToolButton>
          <ToolButton $w={21} aria-label="Hide ribbon"><Icon size={12}>{art.up}</Icon></ToolButton>
          <ToolButton $w={18} aria-label="Help"><Icon size={11}>{art.help}</Icon></ToolButton>
          <FrameButton $tone="light" aria-label="Minimize part"><Icon size={9}>{art.min}</Icon></FrameButton>
          <FrameButton $tone="light" aria-label="Restore part"><Icon size={9}>{art.restore}</Icon></FrameButton>
          <FrameButton $tone="light" aria-label="Close part"><Icon size={9}>{art.x}</Icon></FrameButton>
          <Divider $c="transparent" $light="transparent" $gap={1} />
        </TabTools>
      </TabBar>

      <Ribbon>
        <Under $w={491}>
          <RibbonGroup>
            <RibbonItems>
              <RibbonButton $w={68}><RibbonArt><Icon size={18}>{art.equals}</Icon></RibbonArt>Expressions</RibbonButton>
              <RibbonButton $w={46}><RibbonArt><Icon size={26}>{art.sheet}</Icon></RibbonArt>Spreadsheet</RibbonButton>
              <RibbonButton $w={52}><RibbonArt><Icon size={24}>{art.families}</Icon></RibbonArt>{"Part\nFamilies"}</RibbonButton>
            </RibbonItems>
            <span>Utilities</span>
          </RibbonGroup>
        </Under>
        <Divider $h={70} $gap={2} $c="#b8b8b8" $light="#eee" />
        <RibbonItems>
          <RibbonButton $w={66}><RibbonArt><Icon size={22}>{art.requirements}</Icon></RibbonArt>{"Requirements\nValidation"}</RibbonButton>
          <RibbonButton $w={36}><RibbonArt><Icon size={20}>{art.play}</Icon></RibbonArt>{"Play\nJournal"}</RibbonButton>
          <RibbonButton $w={84}><RibbonArt><Icon size={26}>{art.fusion}</Icon></RibbonArt>{"Knowledge Fusion\nApplications"}</RibbonButton>
        </RibbonItems>
        <Divider $h={70} $gap={2} $c="#b8b8b8" $light="#eee" />
        <Corner><Caret size={5} /></Corner>
      </Ribbon>

      <SelectionBar>
        <Under $w={493} $align="center">
          <ToolButton $w={64}><Icon size={14}>{art.menu}</Icon><span><u>M</u>enu</span><Caret /></ToolButton>
          <Divider $h={28} $gap={3} $c="#b5b5b5" $light="#eee" />
          <Picker label="Selection filter" value="No Selection Filter" w={120} />
        </Under>
        <ToolButton $w={15} aria-label="More"><Caret /></ToolButton>
        <Picker label="Scope" value="Inside" w={92} />
        <ToolButton $w={24} aria-label="Shell"><Icon size={15}>{art.shell}</Icon></ToolButton>
        <ToolButton $w={20} $h={20} $boxed aria-label="Solid"><Icon size={14}>{art.wireCube}</Icon></ToolButton>
        {snaps.map(([name, d]) => <ToolButton key={name} $w={20} aria-label={name}><Icon size={14}>{d}</Icon></ToolButton>)}
        <Stack>
          <ToolButton $w={20} $h={14} aria-label="Line"><Icon size={12}>{art.line2}</Icon></ToolButton>
          <ToolButton $w={20} $h={14} aria-label="Face"><Icon size={14}>{art.face}</Icon></ToolButton>
        </Stack>
        <Divider $h={30} $gap={6} $c="#b5b5b5" $light="#eee" />
        <Picker label="Layer" value="1" w={42} />
        <ToolButton $w={26} aria-label="Fit"><Icon size={14}>{art.fit}</Icon></ToolButton>
        <ToolButton $w={14} aria-label="Zoom"><Icon size={14}>{art.zoomBox}</Icon></ToolButton>
        <ToolButton $w={26} aria-label="Rotate"><Icon size={14}>{art.rotate}</Icon></ToolButton>
        <ToolButton $w={14} aria-label="Edit"><Icon size={14}>{art.pen}</Icon></ToolButton>
        <ToolButton $w={26} aria-label="Layout"><Icon size={14}>{art.grid}</Icon></ToolButton>
        <Caret />
        <ToolButton $w={24} aria-label="Shading"><Icon size={14}>{art.shade}</Icon></ToolButton>
        <Caret />
        <Stack>
          <ToolButton $w={36} $h={17}><Icon size={13}>{blueCube}</Icon><Caret /></ToolButton>
          <ToolButton $w={36} $h={17}><Icon size={13}>{art.axes}</Icon><Caret /></ToolButton>
        </Stack>
        <Stack>
          <ToolButton $w={14} $h={17} aria-label="Clip"><Icon size={13}>{art.clip}</Icon></ToolButton>
          <ToolButton $w={14} $h={17} aria-label="Edit clip"><Icon size={13}>{art.clip2}</Icon></ToolButton>
        </Stack>
        <Divider $h={30} $gap={7} $c="#b5b5b5" $light="#eee" />
        <ToolButton $w={14} aria-label="Measure"><Icon size={13}>{art.ruler}</Icon></ToolButton>
        <Divider $h={30} $gap={7} $c="#b5b5b5" $light="#eee" />
        <ToolButton $w={14} aria-label="Body"><Icon size={13}>{goldCube}</Icon></ToolButton>
        <Divider $h={30} $gap={5} $c="#c0c0c0" $light="#ddd" />
        <Corner><Caret /></Corner>
      </SelectionBar>

      <Main>
        <ResourceBar>
          {resources.map(([name, d, gap]) => (
            <ResourceTab key={name} $gap={gap} $on={name === "Part"} aria-label={name}><Icon size={20}>{d}</Icon></ResourceTab>
          ))}
        </ResourceBar>
        <Navigator>
          <NavTitle><Icon size={12}>{art.pinCube}</Icon>Part Navigator</NavTitle>
          <TreeBox>
            <TreeHead>Name<Caret size={9} flip /></TreeHead>
            <Tree>
              <TreeRow $indent={15}><Icon>{art.clock}</Icon>History Mode</TreeRow>
              <TreeRow $indent={4}><Expander>+</Expander><Icon>{art.views}</Icon>Model Views</TreeRow>
              <TreeRow $indent={4}><Expander>+</Expander><Icon size={12}>{art.check}</Icon><Icon size={12}>{art.camera}</Icon>Cameras</TreeRow>
              <TreeRow $indent={4}><Expander>-</Expander><Icon>{art.folder}</Icon>Model History</TreeRow>
              <TreeRow $indent={32} $dim>
                <TreeCheck type="checkbox" defaultChecked aria-label="Datum" /><Icon size={13}>{art.datum}</Icon>Datum Coordin
              </TreeRow>
              <TreeRow $indent={32} $bold>
                <TreeCheck type="checkbox" defaultChecked aria-label="Linked Body" /><Icon size={13}>{art.linked}</Icon>Linked Body (2
              </TreeRow>
            </Tree>
            <HBar><SideCaret /><Thumb $len={87}><Grip /></Thumb><SideCaret right /></HBar>
          </TreeBox>
          <Splitter />
        </Navigator>
        <Viewport><Part /></Viewport>
      </Main>

      <StatusBar>
        <StatusText $first>Select objects for material assignment</StatusText>
        <StatusText>Selected object has the material Aluminum_2014</StatusText>
        <ToolButton $w={14} aria-label="Cue"><Icon size={12}><path d="M1 1h14v14H1z" fill="#8e8e8e" /><path d="M4 5h8M4 8h8M4 11h8" stroke="#777" /></Icon></ToolButton>
        <ToolButton $w={19} aria-label="Layout"><Icon size={13}>{art.layout}</Icon></ToolButton>
      </StatusBar>

      <AssignMaterial />
    </Window>
  );
}

export default App;
